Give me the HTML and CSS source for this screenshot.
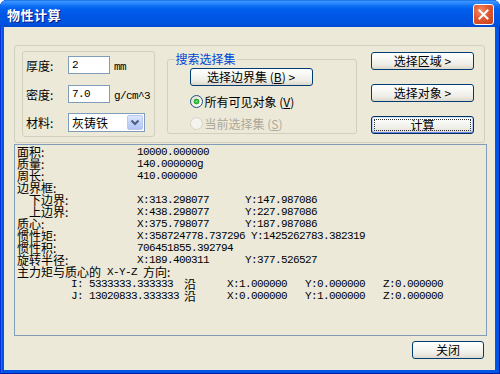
FILE: index.html
```html
<!DOCTYPE html>
<html lang="zh-CN">
<head>
<meta charset="utf-8">
<title>物性计算</title>
<link rel="stylesheet" href="styles.css">
</head>
<body>
<div class="window">
  <div class="titlebar">
    <span class="title">物性计算</span>
    <span class="close-x">
      <svg width="13" height="13" viewBox="0 0 13 13"><path d="M2.5 2.5 L10.5 10.5 M10.5 2.5 L2.5 10.5" stroke="#fff" stroke-width="2" stroke-linecap="square"/></svg>
    </span>
  </div>
  <div class="client">
    <div class="topbox">
      <div class="params">
        <div class="prow"><span class="lbl">厚度:</span><span class="input mono">2</span><span class="unit mono">mm</span></div>
        <div class="prow"><span class="lbl">密度:</span><span class="input mono">7.0</span><span class="unit mono">g/cm^3</span></div>
        <div class="prow"><span class="lbl">材料:</span><span class="select"><span class="sel-text">灰铸铁</span><span class="sel-btn"><svg width="14" height="15" viewBox="0 0 14 15"><path d="M3.5 5.5 L7 9 L10.5 5.5" fill="none" stroke="#4D6185" stroke-width="2.2"/></svg></span></span></div>
      </div>
      <fieldset class="search">
        <legend>搜索选择集</legend>
        <div class="search-body">
          <div class="btn btn-boundary">选择边界集 (<u>B</u>) &gt;</div>
          <div class="radio-row"><span class="radio checked"></span><span>所有可见对象 (<u>V</u>)</span></div>
          <div class="radio-row disabled"><span class="radio"></span><span>当前选择集 (<u>S</u>)</span></div>
        </div>
      </fieldset>
      <div class="actions">
        <div class="btn">选择区域 &gt;</div>
        <div class="btn">选择对象 &gt;</div>
        <div class="btn default">计算</div>
      </div>
    </div>
    <div class="results">
      <div class="row"><span class="k">面积:</span><span class="m">10000.000000</span></div>
      <div class="row"><span class="k">质量:</span><span class="m">140.000000g</span></div>
      <div class="row"><span class="k">周长:</span><span class="m">410.000000</span></div>
      <div class="row"><span class="k">边界框:</span></div>
      <div class="row"><span class="k ind">下边界:</span><span class="m x">X:313.298077</span><span class="m">Y:147.987086</span></div>
      <div class="row"><span class="k ind">上边界:</span><span class="m x">X:438.298077</span><span class="m">Y:227.987086</span></div>
      <div class="row"><span class="k">质心:</span><span class="m x">X:375.798077</span><span class="m">Y:187.987086</span></div>
      <div class="row"><span class="k">惯性矩:</span><span class="m x long">X:358724778.737296</span><span class="m">Y:1425262783.382319</span></div>
      <div class="row"><span class="k">惯性积:</span><span class="m">706451855.392794</span></div>
      <div class="row"><span class="k">旋转半径:</span><span class="m x">X:189.400311</span><span class="m">Y:377.526527</span></div>
      <div class="row"><span class="cj">主力矩与质心的</span><span class="m"> X-Y-Z </span><span class="cj">方向:</span></div>
      <div class="row pr"><span class="m pi">I: 5333333.333333</span><span class="cj yan">沿</span><span class="m c">X:1.000000</span><span class="m c">Y:0.000000</span><span class="m">Z:0.000000</span></div>
      <div class="row pr"><span class="m pi">J: 13020833.333333</span><span class="cj yan">沿</span><span class="m c">X:0.000000</span><span class="m c">Y:1.000000</span><span class="m">Z:0.000000</span></div>
    </div>
    <div class="footer">
      <div class="btn btn-close">关闭</div>
    </div>
  </div>
</div>
</body>
</html>
```
FILE: styles.css
```css
html, body {
  margin: 0;
  padding: 0;
  background: #ffffff;
}
body {
  width: 500px;
  height: 374px;
  overflow: hidden;
  font-family: "Noto Sans CJK SC", "Liberation Sans", sans-serif;
  font-size: 12px;
  color: #000;
}
.window {
  width: 500px;
  height: 374px;
  box-sizing: border-box;
  display: flex;
  flex-direction: column;
  background: #0055E5;
  border-radius: 7px 7px 0 0;
  box-shadow: inset 1px 0 #0831D9, inset -1px 0 #001CA0, inset 0 -1px #001CA0, inset 2px 0 #166AEE;
}
.titlebar {
  flex: none;
  height: 27px;
  display: flex;
  align-items: center;
  justify-content: space-between;
  padding: 0 6px 0 7px;
  border-radius: 7px 7px 0 0;
  background: linear-gradient(to bottom, #0A5FD8 0px, #3D95FF 1px, #2C8AFF 3px, #0F70F5 6px, #0060EE 9px, #0058E6 14px, #0055E3 20px, #0052DE 24px, #0047D0 27px);
}
.title {
  color: #fff;
  font-weight: bold;
  font-size: 13px;
  letter-spacing: 0.5px;
  text-shadow: 1px 1px 0 #0A1883;
  margin-top: 1px;
}
.close-x {
  width: 21px;
  height: 21px;
  box-sizing: border-box;
  border: 1px solid #fff;
  border-radius: 3px;
  background: radial-gradient(circle at 35% 30%, #F08A66 0%, #E0582F 45%, #C4401A 100%);
  display: flex;
  align-items: center;
  justify-content: center;
  margin-top: 1px;
}
.client {
  flex: 1;
  margin: 0 5px 4px 4px;
  background: #ECE9D8;
  padding: 18px 0 0 10px;
  box-sizing: border-box;
  display: flex;
  flex-direction: column;
}
.topbox {
  width: 471px;
  height: 98px;
  box-sizing: border-box;
  border: 1px solid #D0D0BF;
  border-radius: 3px;
  display: flex;
  align-items: flex-start;
  padding: 5px 10px 0 7px;
  gap: 12px;
}
.params {
  width: 133px;
  height: 86px;
  box-sizing: border-box;
  border: 1px solid #D0D0BF;
  border-radius: 3px;
  padding: 4px 0 0 3px;
  display: flex;
  flex-direction: column;
  gap: 11px;
}
.prow {
  display: flex;
  align-items: center;
  height: 18px;
}
.prow:last-child {
  height: 19px;
  margin-top: -1px;
}
.lbl {
  width: 42px;
  flex: none;
}
.mono {
  font-family: "Liberation Mono", "DejaVu Sans Mono", monospace;
  font-size: 11px;
  letter-spacing: -0.6px;
}
.input {
  width: 42px;
  height: 18px;
  box-sizing: border-box;
  border: 1px solid #7F9DB9;
  background: #fff;
  padding-left: 3px;
  line-height: 16px;
}
.unit {
  margin-left: 4px;
  margin-top: 3px;
}
.select {
  width: 77px;
  height: 19px;
  box-sizing: border-box;
  border: 1px solid #7F9DB9;
  background: #fff;
  display: flex;
  align-items: center;
  justify-content: space-between;
  padding: 1px;
}
.sel-text {
  padding-left: 2px;
  line-height: 15px;
}
.sel-btn {
  width: 16px;
  height: 15px;
  box-sizing: border-box;
  border: 1px solid #BAC9EE;
  border-radius: 2px;
  background: linear-gradient(to bottom, #DDE6FC, #C3D3FA 50%, #B2C5F3);
  display: flex;
  align-items: center;
  justify-content: center;
}
.search {
  width: 191px;
  height: 83px;
  box-sizing: border-box;
  margin: 0 1px 0 0;
  padding: 0 0 0 7px;
  border: 1px solid #D0D0BF;
  border-radius: 3px;
  min-width: 0;
}
.search legend {
  padding: 0 1px;
  color: #0046D5;
  line-height: 16px;
}
.search-body {
  padding-left: 15px;
  padding-top: 1px;
  display: flex;
  flex-direction: column;
}
.btn {
  box-sizing: border-box;
  height: 18px;
  border: 1px solid #003C74;
  border-radius: 3px;
  background: linear-gradient(to bottom, #FFFFFF 0%, #F6F6F3 40%, #EDEBE4 75%, #DCD8CC 100%);
  display: flex;
  align-items: center;
  justify-content: center;
  line-height: 16px;
  white-space: pre;
}
.btn-boundary {
  width: 123px;
}
.radio-row {
  display: flex;
  align-items: center;
  gap: 2px;
  height: 13px;
  margin-top: 9px;
}
.radio {
  width: 13px;
  height: 13px;
  box-sizing: border-box;
  border-radius: 50%;
  border: 1px solid #1C5180;
  background: linear-gradient(135deg, #DCDCD7, #FFFFFF);
  flex: none;
}
.radio.checked {
  background: radial-gradient(circle at 50% 50%, #7BE77B 0, #3FBF3F 1.5px, #21A121 2.5px, rgba(33,161,33,0) 3.2px), linear-gradient(135deg, #DCDCD7, #FFFFFF);
}
.radio-row.disabled {
  color: #ACA899;
}
.radio-row.disabled .radio {
  border-color: #D5D3C6;
  background: #F4F3EE;
}
.actions {
  display: flex;
  flex-direction: column;
  gap: 14px;
  margin-top: 1px;
  margin-left: 1px;
}
.actions .btn {
  width: 103px;
}
.btn.default {
  border-color: #002F5C;
  box-shadow: inset 0 1px #CEE7FF, inset 0 -1px #6982EE, inset 1px 0 #B9D1FA, inset -1px 0 #B9D1FA;
  outline: 1px dotted #333;
  outline-offset: -4px;
}
.results {
  margin-top: 1px;
  width: 473px;
  height: 192px;
  box-sizing: border-box;
  border: 1px solid #7F9DB9;
  background: #ECE9D8;
  padding: 1px 0 0 2px;
}
.row {
  display: flex;
  align-items: center;
  height: 12px;
  line-height: 12px;
  white-space: pre;
}
.k, .cj {
  font-size: 12px;
  line-height: 12px;
}
.k {
  width: 120px;
  flex: none;
  box-sizing: border-box;
}
.k.ind {
  padding-left: 12px;
}
.m {
  font-family: "Liberation Mono", "DejaVu Sans Mono", monospace;
  font-size: 11px;
  letter-spacing: -0.6px;
  line-height: 12px;
}
.x {
  width: 108px;
  flex: none;
}
.x.long {
  width: 114px;
}
.row.pr {
  padding-left: 54px;
}
.pi {
  width: 113px;
  flex: none;
}
.yan {
  width: 43px;
  flex: none;
}
.c {
  width: 78px;
  flex: none;
}
.footer {
  display: flex;
  justify-content: flex-end;
  padding: 5px 11px 0 0;
}
.btn-close {
  width: 72px;
}
```
